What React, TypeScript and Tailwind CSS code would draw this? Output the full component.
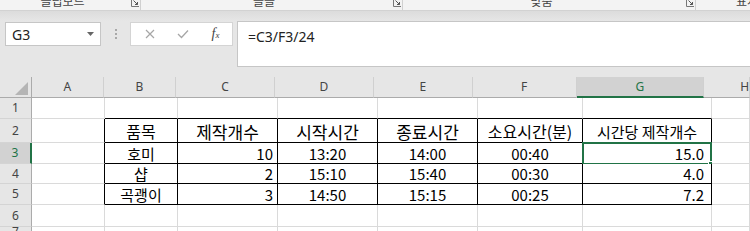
import React from "react";

const CELL_FONT = "font-['Noto_Sans_CJK_KR','Noto_Sans',sans-serif]";

function Launcher() {
  return (
    <svg width="10" height="8" viewBox="0 0 10 8" className="shrink-0">
      <path d="M1.5 0 V6.5 H9" stroke="#777" strokeWidth="1" fill="none" />
      <path d="M3.5 0.5 L7.5 4.5 M7.5 2 V4.5 H5" stroke="#555" strokeWidth="1" fill="none" />
    </svg>
  );
}

function Ribbon() {
  return (
    <div className="h-[10px] bg-[#f3f3f3] flex overflow-hidden text-[12px] leading-[12px] text-[#444] font-['Noto_Sans_CJK_KR',sans-serif]">
      <div className="shrink-0 w-[125px] text-center -mt-[5px]">클립보드</div>
      <div className="shrink-0 w-[5px]" />
      <Launcher />
      <div className="shrink-0 w-[1px] h-[10px] bg-[#d0d0d0]" />
      <div className="shrink-0 w-[246px] text-center -mt-[5px]">글꼴</div>
      <div className="shrink-0 w-[5px]" />
      <Launcher />
      <div className="shrink-0 w-[1px] h-[10px] bg-[#d0d0d0]" />
      <div className="shrink-0 w-[277px] text-center -mt-[5px]">맞춤</div>
      <div className="shrink-0 w-[5px]" />
      <Launcher />
      <div className="shrink-0 w-[1px] h-[10px] bg-[#d0d0d0]" />
      <div className="shrink-0 pl-[40px] -mt-[5px] whitespace-nowrap">표시 형식</div>
    </div>
  );
}

function FormulaBar() {
  return (
    <div className="h-[56px] bg-[#e6e6e6] flex items-start">
      <div className="ml-[5px] mt-[1px] h-[24px] w-[96px] bg-white border border-[#c6c6c6] flex items-center justify-between pl-[6px] pr-[6px] font-['Noto_Sans',sans-serif] text-[14px] text-[#222]">
        <span>G3</span>
        <svg width="7" height="4" viewBox="0 0 7 4">
          <path d="M0 0 H7 L3.5 4 Z" fill="#666" />
        </svg>
      </div>
      <div className="ml-[13px] mt-[8px] w-[3px] flex flex-col items-center gap-[2px]">
        <div className="w-[2px] h-[2px] bg-[#a8a8a8]" />
        <div className="w-[2px] h-[2px] bg-[#a8a8a8]" />
        <div className="w-[2px] h-[2px] bg-[#a8a8a8]" />
      </div>
      <div className="ml-[13px] mt-[1px] h-[24px] w-[103px] bg-white border border-[#d4d4d4] flex items-center pl-[2px]">
        <div className="w-[33px] flex justify-center">
          <svg width="10" height="10" viewBox="0 0 10 10">
            <path d="M1 1 L9 9 M9 1 L1 9" stroke="#a6a6a6" strokeWidth="1.2" />
          </svg>
        </div>
        <div className="w-[33px] flex justify-center">
          <svg width="12" height="10" viewBox="0 0 12 10">
            <path d="M1 5 L4.5 8.5 L11 1.5" stroke="#a6a6a6" strokeWidth="1.3" fill="none" />
          </svg>
        </div>
        <div className="w-[33px] flex justify-center font-['Liberation_Serif',serif] italic text-[14px] text-[#444] leading-none">
          <span>f</span>
          <span className="text-[9px] mt-[4px]">x</span>
        </div>
      </div>
      <div className="ml-[4px] h-[46px] flex-1 bg-white border-l border-t border-b border-[#c6c6c6] pl-[10px] pt-[4px] font-['Noto_Sans',sans-serif] text-[14px] text-[#222]">
        =C3/F3/24
      </div>
    </div>
  );
}

const colW = ["w-[73px]", "w-[73px]", "w-[100px]", "w-[100px]", "w-[100px]", "w-[105px]", "w-[129px]", "flex-1"];
const letters = ["A", "B", "C", "D", "E", "F", "G", "H"];
const rowH = ["h-[21px]", "h-[24px]", "h-[21px]", "h-[20px]", "h-[21px]", "h-[22px]", "h-[10px]"];

const data: Record<number, string[]> = {
  2: ["품목", "제작개수", "시작시간", "종료시간", "소요시간(분)", "시간당 제작개수"],
  3: ["호미", "10", "13:20", "14:00", "00:40", "15.0"],
  4: ["샵", "2", "15:10", "15:40", "00:30", "4.0"],
  5: ["곡괭이", "3", "14:50", "15:15", "00:25", "7.2"],
};

function HeaderRow() {
  return (
    <div className="flex h-[21px]">
      <div className="w-[32px] h-full bg-[#e6e6e6] border-r border-b border-[#ababab] flex items-end justify-end pr-[3px] pb-[2px]">
        <svg width="13" height="13" viewBox="0 0 13 13">
          <path d="M13 0 V13 H0 Z" fill="#b5b5b5" />
        </svg>
      </div>
      {letters.map((l, i) => {
        const sel = l === "G";
        return (
          <div
            key={l}
            className={
              colW[i] +
              " h-full border-r border-r-[#d0d0d0] flex items-center justify-center text-[12px] font-['Noto_Sans',sans-serif] " +
              (sel
                ? "bg-[#d2d2d2] border-b-2 border-b-[#217346] text-[#217346]"
                : "bg-[#e6e6e6] border-b border-b-[#ababab] text-[#444]") +
              (l === "H" ? " justify-start pl-[36px]" : "")
            }
          >
            {l}
          </div>
        );
      })}
    </div>
  );
}

function BodyCell({ r, c }: { r: number; c: number }) {
  const tableRow = r >= 2 && r <= 5;
  const rightBlack = tableRow && c >= 0 && c <= 6;
  const bottomBlack = r >= 1 && r <= 5 && c >= 1 && c <= 6;
  const text = tableRow && c >= 1 && c <= 6 ? data[r][c - 1] : "";
  const isHeader = r === 2;
  let align = "justify-center";
  if (!isHeader && c === 2) align = "justify-end pr-[4px]";
  if (!isHeader && c === 6) align = "justify-end pr-[7px]";
  let size = "text-[15px]";
  if (isHeader) size = "text-[16px]";
  if (isHeader && (c === 2 || c === 3 || c === 4)) size = "text-[17px]";
  if (isHeader && c === 6) size = "text-[15px]";
  const selected = r === 3 && c === 6;
  return (
    <div
      className={
        colW[c] +
        " relative h-full bg-white flex " +
        (isHeader ? "items-end pb-[2px] " : "items-center ") +
        align +
        " " +
        size +
        " text-black whitespace-nowrap " +
        CELL_FONT +
        " border-r border-b " +
        (rightBlack ? "border-r-black " : "border-r-[#dadada] ") +
        (bottomBlack ? "border-b-black" : "border-b-[#dadada]")
      }
    >
      {text !== "" && <div className="leading-[17px]">{text}</div>}
      {selected && (
        <>
          <div className="absolute -left-[1px] -top-[1px] w-[130px] h-[23px] border-2 border-[#217346]" />
          <div className="absolute left-[125px] top-[18px] w-[6px] h-[6px] bg-[#217346] border border-white" />
        </>
      )}
    </div>
  );
}

function BodyRow({ r }: { r: number }) {
  const sel = r === 3;
  return (
    <div className={"flex " + rowH[r - 1]}>
      <div
        className={
          "w-[32px] h-full border-b border-b-[#d4d4d4] flex items-center justify-center text-[12px] font-['Noto_Sans',sans-serif] " +
          (sel
            ? "bg-[#d2d2d2] border-r-2 border-r-[#217346] text-[#217346]"
            : "bg-[#e6e6e6] border-r border-r-[#ababab] text-[#444]")
        }
      >
        {r}
      </div>
      {letters.map((_, c) => (
        <BodyCell key={c} r={r} c={c} />
      ))}
    </div>
  );
}

export default function App() {
  return (
    <div className="w-[750px] h-[231px] overflow-hidden bg-[#e6e6e6]">
      <Ribbon />
      <div className="h-[1px] bg-[#d2d2d2]" />
      <div className="h-[10px] bg-gradient-to-b from-[#dcdcdc] to-[#e6e6e6]" />
      <FormulaBar />
      <HeaderRow />
      {[1, 2, 3, 4, 5, 6, 7].map((r) => (
        <BodyRow key={r} r={r} />
      ))}
    </div>
  );
}
